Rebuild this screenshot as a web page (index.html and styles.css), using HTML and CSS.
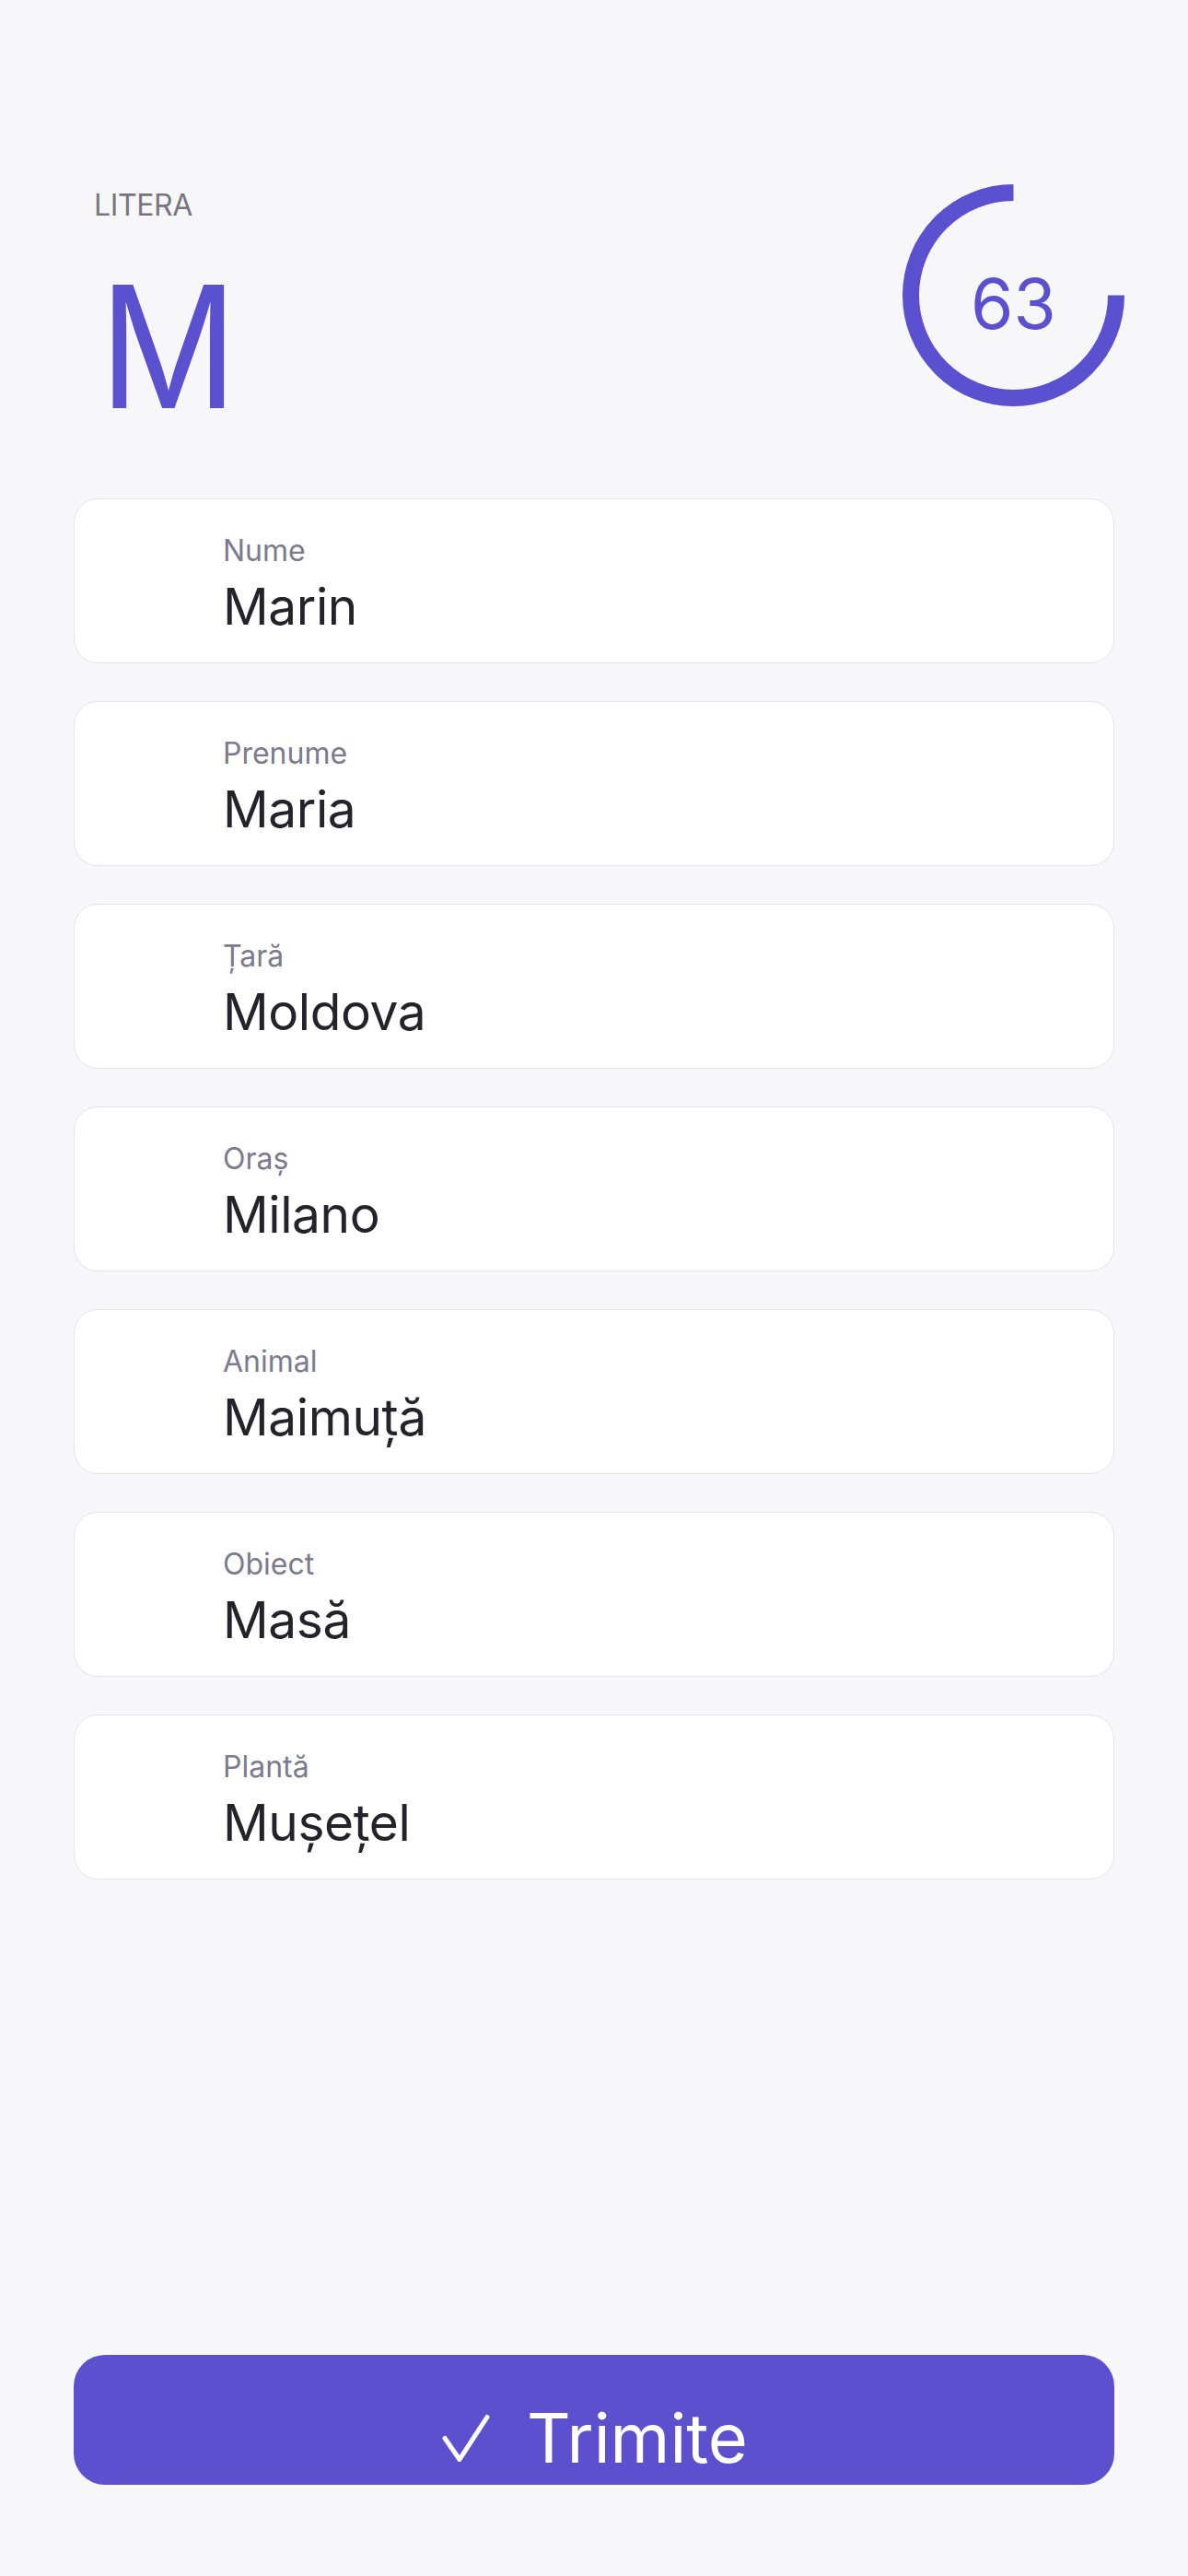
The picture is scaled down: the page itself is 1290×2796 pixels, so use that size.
FILE: index.html
```html
<!DOCTYPE html>
<html lang="ro">
<head>
<meta charset="utf-8">
<title>Litera M</title>
<link rel="stylesheet" href="styles.css">
</head>
<body>
<main class="screen">
  <header class="top">
    <div class="letter-block">
      <div class="letter-label">LITERA</div>
      <div class="letter">M</div>
    </div>
    <div class="timer">
      <svg class="timer-ring" width="241" height="241" viewBox="0 0 241 241">
        <path d="M120.5 9 A111.5 111.5 0 1 0 232 120.5" fill="none" stroke="#5b50cf" stroke-width="18"/>
      </svg>
      <span class="timer-value">63</span>
    </div>
  </header>

  <section class="fields">
    <div class="field"><div class="field-label">Nume</div><div class="field-value">Marin</div></div>
    <div class="field"><div class="field-label">Prenume</div><div class="field-value">Maria</div></div>
    <div class="field"><div class="field-label">Țară</div><div class="field-value">Moldova</div></div>
    <div class="field"><div class="field-label">Oraș</div><div class="field-value">Milano</div></div>
    <div class="field"><div class="field-label">Animal</div><div class="field-value">Maimuță</div></div>
    <div class="field"><div class="field-label">Obiect</div><div class="field-value">Masă</div></div>
    <div class="field"><div class="field-label">Plantă</div><div class="field-value">Mușețel</div></div>
  </section>

  <button class="submit" type="button">
    <svg class="check" width="56" height="56" viewBox="0 0 56 56">
      <polyline points="5,27.5 21,50.5 51,4.5" fill="none" stroke="#ffffff" stroke-width="5" stroke-linecap="round" stroke-linejoin="round"/>
    </svg>
    <span class="submit-text">Trimite</span>
  </button>
</main>
</body>
</html>
```

FILE: styles.css
```css
* {
  box-sizing: border-box;
}

html, body {
  margin: 0;
  padding: 0;
  background: #f7f7f9;
}

body {
  font-family: Inter, "Noto Sans", "Liberation Sans", sans-serif;
  color: #24232b;
}

.screen {
  min-height: 2796px;
  display: flex;
  flex-direction: column;
  padding: 200px 80px 99px 80px;
}

.top {
  display: flex;
  justify-content: space-between;
  align-items: flex-start;
  padding-left: 22px;
  margin-right: -11px;
}

.letter-block {
  display: flex;
  flex-direction: column;
  padding-top: 4px;
  gap: 42px;
}

.letter-label {
  font-size: 32px;
  line-height: 38px;
  color: #77767f;
  letter-spacing: -0.4px;
}

.letter {
  font-size: 184px;
  line-height: 184px;
  color: #5b50cf;
  font-weight: 400;
  margin-left: 6px;
  transform: scaleX(0.9);
  transform-origin: 0 50%;
}

.timer {
  display: grid;
  width: 241px;
  height: 241px;
}

.timer-ring {
  grid-area: 1 / 1;
  display: block;
}

.timer-value {
  grid-area: 1 / 1;
  place-self: center;
  padding-top: 18px;
  font-size: 75px;
  line-height: 90px;
  color: #5b50cf;
}

.fields {
  margin-top: 73px;
  display: flex;
  flex-direction: column;
  gap: 41px;
}

.field {
  background: #ffffff;
  border: 1px solid #e4e3ee;
  border-radius: 26px;
  padding: 37px 40px 28px 161px;
  display: flex;
  flex-direction: column;
  gap: 8px;
}

.field-label {
  font-size: 32px;
  line-height: 38px;
  color: #7b7a8e;
}

.field-value {
  font-size: 55px;
  line-height: 66px;
  color: #24232b;
  letter-spacing: -0.4px;
}

.submit {
  margin-top: auto;
  height: 141px;
  border: none;
  border-radius: 34px;
  background: #5c50cf;
  color: #ffffff;
  font-family: inherit;
  display: flex;
  justify-content: center;
  align-items: center;
  gap: 38px;
  padding: 46px 0 6px 0;
}

.check {
  display: block;
  flex: none;
}

.submit-text {
  font-size: 74px;
  line-height: 89px;
  font-weight: 400;
}
```
